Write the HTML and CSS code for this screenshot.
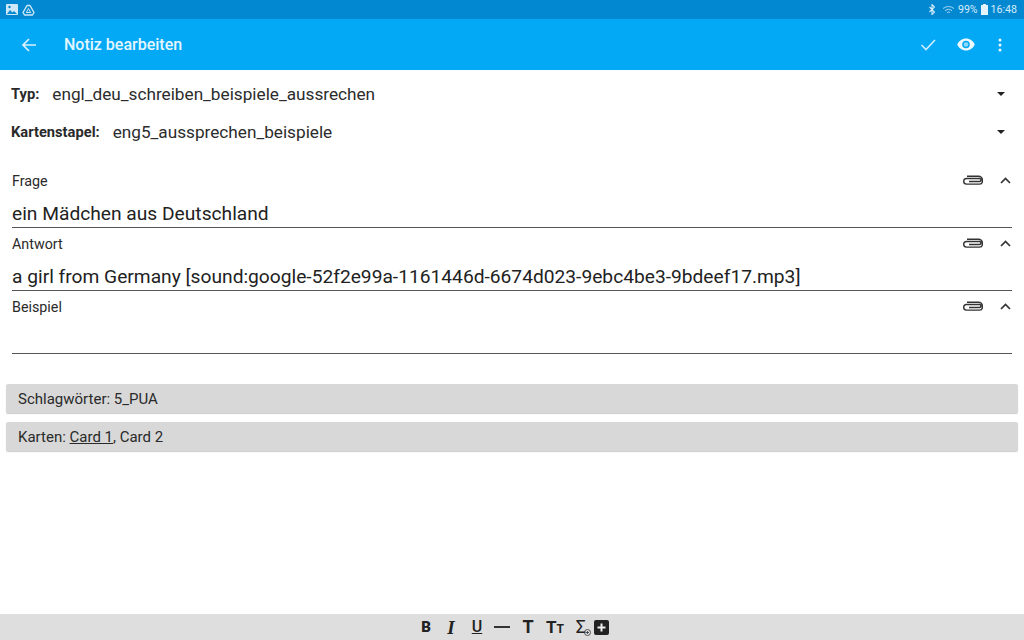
FILE: index.html
```html
<!DOCTYPE html>
<html lang="de">
<head>
<meta charset="utf-8">
<title>Notiz bearbeiten</title>
<link rel="stylesheet" href="styles.css">
</head>
<body>
<div class="app">
  <div class="statusbar">
    <div class="status-left">
      <svg width="12" height="11" viewBox="0 0 12 11"><rect width="12" height="11" rx="1" fill="#cfe8f7"/><path d="M1 10l3-4 2.500 2.500 1.500-1.500 3 3z" fill="#0288d1"/><circle cx="3.500" cy="3" r="1.200" fill="#0288d1"/></svg>
      <svg width="13" height="12" viewBox="0 0 13 12"><path d="M5 1.500h3l4 7-1.500 2.500h-8L1 8.500z" fill="none" stroke="#cfe8f7" stroke-width="1.400" stroke-linejoin="round"/><path d="M6.500 4.500L8.700 8.500H4.300z" fill="none" stroke="#cfe8f7" stroke-width="1"/></svg>
    </div>
    <div class="status-right">
      <svg class="bt" width="6" height="11" viewBox="0 0 6 11"><path d="M0.500 3l5 5-2.500 2.500V0.500L5.500 3l-5 5" fill="none" stroke="#d5ecfa" stroke-width="1.100"/></svg>
      <svg width="13" height="10" viewBox="0 0 13 10"><path d="M1 3.500q5.500-4 11 0M3 5.500q3.500-2.500 7 0M5 7.500q1.500-1 3 0" fill="none" stroke="#a9d6f0" stroke-width="1"/></svg>
      <span class="st">99%</span>
      <svg width="7" height="11" viewBox="0 0 7 11"><path d="M2 0h3v1h2v10H0V1h2z" fill="#e3f2fb"/></svg>
      <span class="st">16:48</span>
    </div>
  </div>
  <header class="toolbar">
    <svg class="back" width="16" height="16" viewBox="0 0 16 16"><path d="M15 8H2M8 2L2 8l6 6" fill="none" stroke="#d9f1fe" stroke-width="1.700"/></svg>
    <h1 class="title">Notiz bearbeiten</h1>
    <div class="actions">
      <svg width="16" height="13" viewBox="0 0 16 13"><path d="M1.500 7l4.500 4.500L15 2" fill="none" stroke="#cdecfd" stroke-width="1.700"/></svg>
      <svg width="18" height="13" viewBox="0 0 18 13"><path d="M9 0.500C5 0.500 1.700 3 0.300 6.500 1.700 10 5 12.500 9 12.500s7.300-2.500 8.700-6C16.300 3 13 0.500 9 0.500z" fill="#eaf8ff"/><circle cx="9" cy="6.500" r="3.800" fill="#03a9f4"/><circle cx="9" cy="6.500" r="2.300" fill="#8fd8fa"/></svg>
      <svg class="dots" width="4" height="14" viewBox="0 0 4 14"><circle cx="2" cy="2" r="1.500" fill="#eaf8ff"/><circle cx="2" cy="7" r="1.500" fill="#eaf8ff"/><circle cx="2" cy="12" r="1.500" fill="#eaf8ff"/></svg>
    </div>
  </header>
  <main class="content">
    <div class="select-row first">
      <span class="sel-label">Typ:</span><span class="sel-value">engl_deu_schreiben_beispiele_aussrechen</span>
      <span class="caret"></span>
    </div>
    <div class="select-row">
      <span class="sel-label">Kartenstapel:</span><span class="sel-value">eng5_aussprechen_beispiele</span>
      <span class="caret"></span>
    </div>
    <section class="fields">
      <div class="field">
        <div class="field-head"><span class="field-label">Frage</span>
          <svg class="clip" width="21" height="11" viewBox="0 0 21 11"><use href="#clip"/></svg>
          <svg class="chev" width="11" height="7" viewBox="0 0 11 7"><path d="M1 6l4.500-4.500L10 6" fill="none" stroke="#333" stroke-width="1.700"/></svg>
        </div>
        <div class="field-value">ein Mädchen aus Deutschland</div>
      </div>
      <div class="field">
        <div class="field-head"><span class="field-label">Antwort</span>
          <svg class="clip" width="21" height="11" viewBox="0 0 21 11"><use href="#clip"/></svg>
          <svg class="chev" width="11" height="7" viewBox="0 0 11 7"><path d="M1 6l4.500-4.500L10 6" fill="none" stroke="#333" stroke-width="1.700"/></svg>
        </div>
        <div class="field-value">a girl from Germany [sound:google-52f2e99a-1161446d-6674d023-9ebc4be3-9bdeef17.mp3]</div>
      </div>
      <div class="field">
        <div class="field-head"><span class="field-label">Beispiel</span>
          <svg class="clip" width="21" height="11" viewBox="0 0 21 11"><use href="#clip"/></svg>
          <svg class="chev" width="11" height="7" viewBox="0 0 11 7"><path d="M1 6l4.500-4.500L10 6" fill="none" stroke="#333" stroke-width="1.700"/></svg>
        </div>
        <div class="field-value">&nbsp;</div>
      </div>
    </section>
    <div class="chips">
      <div class="chip">Schlagwörter: 5_PUA</div>
      <div class="chip">Karten: <u>Card 1</u>, Card 2</div>
    </div>
  </main>
  <footer class="format-bar">
    <span class="fb b">B</span>
    <span class="fb i">I</span>
    <span class="fb u">U</span>
    <span class="dash"></span>
    <span class="fb t">T</span>
    <span class="fb tt">T<small>T</small></span>
    <span class="fb sig">Σ<svg class="sigc" width="7" height="7" viewBox="0 0 7 7"><circle cx="3.500" cy="3.500" r="3" fill="none" stroke="#333" stroke-width="0.800"/><path d="M2 3.500h3M3.500 2v3" stroke="#333" stroke-width="0.800"/></svg></span>
    <svg class="plus" width="15" height="15" viewBox="0 0 15 15"><rect width="15" height="15" rx="2" fill="#222"/><path d="M7.500 3.500v8M3.500 7.500h8" stroke="#eee" stroke-width="2"/></svg>
  </footer>
</div>
<svg class="defs" width="0" height="0"><defs><g id="clip"><path d="M7 6.500h10.500a1.500 1.500 0 0 0 0-3H4.500a2.800 2.800 0 0 0 0 5.600h13a2.900 2.900 0 0 0 2.900-2.900V5A3.900 3.900 0 0 0 16.500 1.200H5" fill="none" stroke="#333" stroke-width="1.400"/></g></defs></svg>
</body>
</html>
```
FILE: styles.css
```css
* { box-sizing: border-box; margin: 0; padding: 0; }
html, body { width: 1024px; height: 640px; overflow: hidden; background: #fff; }
body { font-family: Roboto, "Liberation Sans", sans-serif; color: #222; }
.app { width: 1024px; height: 640px; display: flex; flex-direction: column; }
.defs { display: block; height: 0; }

.statusbar { height: 19px; flex: none; background: #0288d1; display: flex; align-items: center; justify-content: space-between; padding: 0 7px 0 6px; }
.status-left, .status-right { display: flex; align-items: center; }
.status-left { gap: 4px; }
.status-right { gap: 3px; }
.bt { margin-right: 4px; }
.st { font-size: 10.600px; color: #d5ecfa; }

.toolbar { height: 51px; flex: none; background: #03a9f4; display: flex; align-items: center; padding: 0 22px 0 21px; }
.title { font-size: 16px; font-weight: 500; color: #e3f6ff; margin-left: 27px; flex: 1; }
.actions { display: flex; align-items: center; gap: 21px; }
.dots { margin-left: 2px; }

.content { flex: 1; display: flex; flex-direction: column; min-height: 0; }
.select-row { height: 38px; display: flex; align-items: center; padding: 0 19px 0 11px; }
.select-row.first { margin-top: 5px; }
.sel-label { font-size: 14.700px; font-weight: 700; color: #2a2a2a; margin-right: 13px; }
.sel-value { font-size: 17.200px; flex: 1; color: #2c2c2c; }
.caret { width: 0; height: 0; border-left: 4px solid transparent; border-right: 4px solid transparent; border-top: 4px solid #222; }

.fields { margin: 14px 12px 0; }
.field { height: 63px; border-bottom: 1px solid #555; padding-top: 3px; }
.field-head { height: 25px; display: flex; align-items: center; }
.field-label { font-size: 14.300px; flex: 1; color: #2a2a2a; }
.clip { margin-right: 17px; }
.chev { margin-right: 1px; }
.field-value { font-size: 19.200px; line-height: 24px; margin-top: 9px; color: #222; white-space: nowrap; }

.chips { margin: 30px 6px 0; display: flex; flex-direction: column; gap: 9px; }
.chip { height: 29px; line-height: 30px; background: #d8d8d8; border-radius: 2px; box-shadow: 0 1px 1px rgba(0,0,0,.2); padding-left: 12px; font-size: 15px; color: #2a2a2a; }

.format-bar { height: 26px; flex: none; background: #dedede; display: flex; align-items: center; justify-content: center; gap: 12px; padding-left: 6px; color: #222; }
.fb { line-height: 1; display: block; text-align: center; font-weight: 900; }
.b { width: 10px; font-size: 15px; margin-right: 3px; }
.i { width: 10px; font-size: 19px; font-weight: 700; font-style: italic; font-family: "Liberation Serif", serif; margin-right: 3px; }
.u { width: 12px; font-size: 16px; font-weight: 500; text-decoration: underline; margin-right: -1px; }
.dash { width: 16px; height: 2px; background: #333; }
.t { width: 12px; font-size: 18px; font-weight: 700; }
.tt { width: 16px; font-size: 17px; font-weight: 700; }
.tt small { font-size: 12px; }
.sig { width: 14px; font-weight: 400; font-size: 18px; position: relative; margin-right: -6px; }
.sigc { position: absolute; right: -3px; bottom: 0; }
```
